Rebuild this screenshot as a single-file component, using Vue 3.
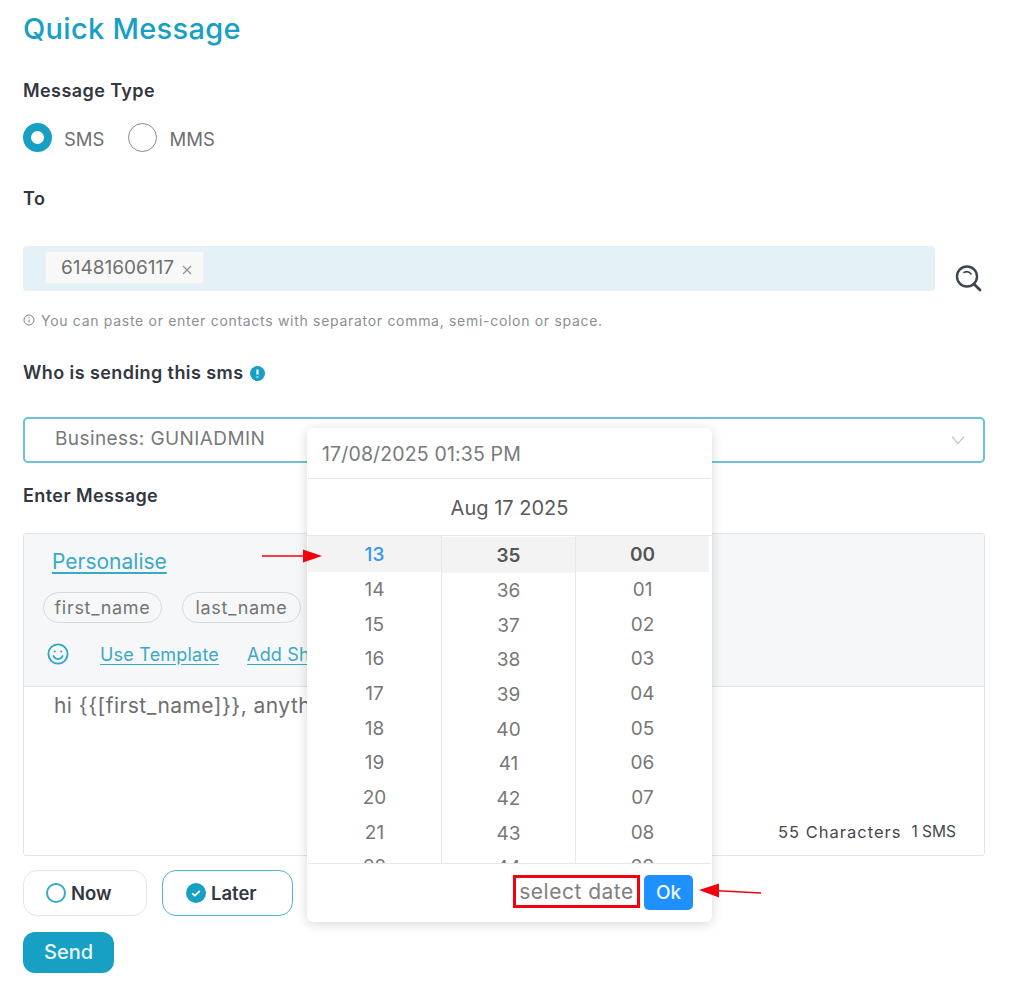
<script setup>
const range = (start, n) => Array.from({ length: n }, (_, i) => String(start + i).padStart(2, '0'))
const columns = [
  { key: 'h', items: range(13, 10) },
  { key: 'm', items: range(35, 10) },
  { key: 's', items: range(0, 10) },
]
const messageText = 'hi {' + '{[first_name]}' + '}, anything new today'
</script>

<template>
  <div class="page">
    <h1 class="title">Quick Message</h1>

    <div class="label type-label">Message Type</div>
    <div class="radios">
      <span class="radio on"></span><span class="radio-text">SMS</span>
      <span class="radio"></span><span class="radio-text">MMS</span>
    </div>

    <div class="label to-label">To</div>
    <div class="to-row">
      <div class="to-input">
        <span class="tag">61481606117
          <svg class="tag-x" width="10" height="10" viewBox="0 0 10 10"><path d="M1 1l8 8M9 1l-8 8" stroke="#8f8f8f" stroke-width="1.1" fill="none" /></svg>
        </span>
      </div>
      <svg class="search" width="28" height="28" viewBox="0 0 28 28" fill="none">
        <circle cx="13" cy="12.5" r="10" stroke="#3c4650" stroke-width="2.4" />
        <path d="M20 20l6 6" stroke="#3c4650" stroke-width="2.8" stroke-linecap="round" />
        <path d="M10 8.5a5.5 5.5 0 0 1 7 1.5" stroke="#3c4650" stroke-width="1.6" stroke-linecap="round" />
      </svg>
    </div>
    <div class="hint">
      <svg width="12" height="12" viewBox="0 0 12 12" fill="none"><circle cx="6" cy="6" r="5" stroke="#7d828a" /><path d="M6 5.4v3M6 3.2v1" stroke="#7d828a" /></svg>
      <span>You can paste or enter contacts with separator comma, semi-colon or space.</span>
    </div>

    <div class="label who-label">Who is sending this sms
      <svg width="15" height="15" viewBox="0 0 15 15"><circle cx="7.5" cy="7.5" r="7.5" fill="#17a0c4" /><path d="M7.5 3.4v5M7.5 10.4v1.2" stroke="#fff" stroke-width="2.2" /></svg>
    </div>
    <div class="select">
      <span class="select-value">Business: GUNIADMIN</span>
      <svg width="14" height="10" viewBox="0 0 14 10" fill="none"><path d="M1 1.5l6 7 6-7" stroke="#c4c7cb" stroke-width="1.2" /></svg>
    </div>

    <div class="label msg-label">Enter Message</div>
    <div class="panel">
      <div class="panel-head">
        <a class="personalise">Personalise</a>
        <div class="chips">
          <span class="chip">first_name</span>
          <span class="chip">last_name</span>
        </div>
        <div class="tools">
          <svg width="22" height="22" viewBox="0 0 22 22" fill="none" stroke="#2fa4c4" stroke-width="1.8">
            <circle cx="11" cy="11" r="9.6" />
            <path d="M6.4 13a5 5 0 0 0 9.2 0" stroke-linecap="round" />
            <circle cx="7.8" cy="8.4" r="1" fill="#2fa4c4" stroke="none" />
            <circle cx="14.2" cy="8.4" r="1" fill="#2fa4c4" stroke="none" />
          </svg>
          <a class="tool-link first">Use Template</a>
          <a class="tool-link">Add Short URL</a>
        </div>
      </div>
      <div class="panel-body">
        <div class="msg-text" v-text="messageText"></div>
        <div class="counter"><span class="count-chars">55 Characters</span><span class="count-sms">1 SMS</span></div>
      </div>
    </div>

    <div class="when">
      <button class="when-btn now"><span class="ring"></span>Now</button>
      <button class="when-btn later">
        <svg width="20" height="20" viewBox="0 0 20 20"><circle cx="10" cy="10" r="10" fill="#17a0c4" /><path d="M6.2 10.3l2.6 2.3 5-4.6" stroke="#fff" stroke-width="1.8" fill="none" /></svg>
        Later
      </button>
    </div>
    <button class="send">Send</button>

    <div class="picker">
      <div class="picker-input">17/08/2025 01:35 PM</div>
      <div class="picker-date">Aug 17 2025</div>
      <div class="picker-cols">
        <ul v-for="col in columns" :key="col.key" class="col" :class="'col-' + col.key">
          <li v-for="(item, i) in col.items" :key="item" class="cell" :class="{ active: i === 0 }">{{ item }}</li>
        </ul>
      </div>
      <div class="picker-foot">
        <span class="select-date">select date</span>
        <button class="ok">Ok</button>
      </div>
    </div>

    <svg class="annot annot-left" width="60" height="14" viewBox="0 0 60 14">
      <path d="M0 7h44" stroke="#f20010" stroke-width="1.6" />
      <path d="M41 0.5L60 7 41 13.5z" fill="#f20010" />
    </svg>
    <svg class="annot annot-right" width="62" height="16" viewBox="0 0 62 16">
      <path d="M62 10L14 7.5" stroke="#f20010" stroke-width="1.6" />
      <path d="M0 7L20 0.5V14.5z" fill="#f20010" />
    </svg>
  </div>
</template>

<style>
html, body { margin: 0; background: #fff; }
</style>

<style scoped>
* { box-sizing: border-box; }
.page {
  position: relative;
  width: 1024px;
  height: 999px;
  overflow: hidden;
  padding: 0 39px 0 23px;
  font-family: Inter, "Noto Sans", sans-serif;
  color: #6b6b6b;
  background: #fff;
}
.title {
  margin: 0;
  padding-top: 11px;
  height: 73px;
  font-size: 29px;
  line-height: 36px;
  font-weight: 500;
  letter-spacing: 0.3px;
  color: #17a0c4;
}
.label {
  font-size: 18px;
  line-height: 24px;
  font-weight: 600;
  letter-spacing: 0.42px;
  color: #333740;
}
.type-label { margin-top: 6px; }
.radios {
  display: flex;
  align-items: center;
  margin-top: 20px;
  height: 28px;
}
.radio {
  width: 29px;
  height: 29px;
  border-radius: 50%;
  border: 1.5px solid #8a8a8a;
}
.radio.on { border: 8px solid #17a0c4; }
.radio-text {
  margin: 0 24px 0 12px;
  padding-top: 3px;
  font-size: 18.5px;
  color: #6e6e6e;
}
.to-label { margin-top: 36px; }
.to-row {
  display: flex;
  align-items: flex-start;
  margin-top: 35px;
}
.to-input {
  display: flex;
  align-items: flex-start;
  width: 912px;
  height: 45px;
  padding: 5px 22px;
  background: #e4f2f7;
  border-radius: 4px;
}
.tag {
  display: flex;
  align-items: center;
  height: 33px;
  width: 159px;
  padding-left: 15px;
  font-size: 19px;
  background: #f8f8f8;
  border: 1px solid #eef0f1;
  color: #707070;
  white-space: nowrap;
}
.tag-x { margin-left: 8px; margin-top: 4px; }
.search { margin: 18px 0 0 19px; }
.hint {
  display: flex;
  align-items: center;
  gap: 6px;
  margin-top: 19px;
  height: 18px;
  font-size: 14px;
  letter-spacing: 0.7px;
  white-space: nowrap;
  color: #8b8f96;
}
.who-label {
  display: flex;
  align-items: center;
  gap: 6px;
  margin-top: 32px;
}
.select {
  display: flex;
  align-items: center;
  justify-content: space-between;
  height: 46px;
  margin-top: 32px;
  padding: 0 18px 0 30px;
  border: 2px solid #6cc3d9;
  border-radius: 5px;
  font-size: 19px;
  letter-spacing: 0.4px;
  color: #77797c;
}
.select-value { padding-bottom: 3px; }
.msg-label { margin-top: 21px; }
.panel {
  margin-top: 25px;
  height: 323px;
  border: 1px solid #e2e5e8;
  border-radius: 3px;
}
.panel-head {
  height: 153px;
  padding: 16px 19px;
  background: #f6f7f9;
  border-bottom: 1px solid #dfe2e5;
}
.personalise, .tool-link {
  color: #3ba9c6;
  text-decoration: underline;
  text-underline-offset: 3px;
}
.personalise {
  display: block;
  margin-left: 9px;
  font-size: 21px;
  line-height: 24px;
}
.chips {
  display: flex;
  gap: 20px;
  margin-top: 18px;
}
.chip {
  display: flex;
  align-items: center;
  justify-content: center;
  width: 119px;
  height: 31px;
  border: 1px solid #d8dadc;
  border-radius: 16px;
  font-size: 18px;
  letter-spacing: 0.7px;
  color: #747474;
}
.tools {
  display: flex;
  align-items: center;
  gap: 28px;
  margin: 20px 0 0 4px;
}
.tools svg { margin-right: 3px; }
.tool-link { font-size: 18px; letter-spacing: 0.2px; white-space: nowrap; }
.panel-body {
  position: relative;
  height: 168px;
  padding: 6px 30px;
}
.msg-text {
  font-size: 21px;
  line-height: 26px;
  letter-spacing: 0.45px;
  color: #6e6e6e;
}
.counter {
  position: absolute;
  right: 28px;
  bottom: 13px;
  display: flex;
  gap: 10px;
  color: #45484d;
}
.count-chars { font-size: 16.5px; letter-spacing: 1px; }
.count-sms { font-size: 15.5px; }
.when {
  display: flex;
  gap: 15px;
  margin-top: 14px;
}
.when-btn {
  display: flex;
  align-items: center;
  gap: 5px;
  height: 46px;
  background: #fff;
  font-family: inherit;
  font-size: 18.5px;
  font-weight: 600;
  color: #333740;
  border-radius: 14px;
}
.now { width: 124px; padding: 0 0 0 22px; border: 1px solid #e2e6ea; }
.later { width: 131px; padding: 0 0 0 23px; border: 1.5px solid #4fb6d0; }
.ring {
  width: 20px;
  height: 20px;
  border: 2px solid #3ba9c6;
  border-radius: 50%;
}
.send {
  display: block;
  width: 91px;
  height: 41px;
  margin-top: 16px;
  padding: 0 0 2px;
  border: 0;
  border-radius: 12px;
  background: #17a0c4;
  color: #eaf7fb;
  font-family: inherit;
  font-size: 20px;
  font-weight: 500;
}
.picker {
  position: absolute;
  left: 307px;
  top: 428px;
  width: 405px;
  height: 494px;
  display: flex;
  flex-direction: column;
  background: #fff;
  border-radius: 6px;
  box-shadow: 0 2px 12px rgba(0, 0, 0, 0.16);
}
.picker-input {
  height: 51px;
  margin: 0 1px;
  padding: 2px 14px 0;
  display: flex;
  align-items: center;
  border-bottom: 1px solid #e8e8e8;
  font-size: 19.5px;
  letter-spacing: 0.15px;
  color: #77797c;
}
.picker-date {
  height: 57px;
  padding-top: 2px;
  display: flex;
  align-items: center;
  justify-content: center;
  border-bottom: 1px solid #e8e8e8;
  font-size: 20px;
  color: #5a5a5a;
}
.picker-cols {
  display: flex;
  height: 328px;
  margin: 0 1px;
  overflow: hidden;
  border-bottom: 1px solid #e8e8e8;
}
.col {
  flex: 1;
  margin: 0;
  padding: 0;
  list-style: none;
  border-left: 1px solid #e8e8e8;
}
.col-h { border-left: 0; }
.col-m .cell { transform: translateY(1px); }
.col-s { margin-right: 2px; }
.cell {
  height: 34.7px;
  display: flex;
  align-items: center;
  justify-content: center;
  font-size: 19px;
  color: #777;
}
.cell.active {
  height: 36px;
  background: #f3f3f3;
  font-weight: 600;
  color: #555;
}
.col-h .cell.active { color: #2f97f5; font-weight: 500; }
.picker-foot {
  display: flex;
  align-items: flex-start;
  justify-content: flex-end;
  flex: 1;
  gap: 4px;
  padding: 11px 19px 0 0;
}
.select-date {
  display: flex;
  align-items: center;
  justify-content: center;
  width: 127px;
  height: 33px;
  border: 3px solid #f20010;
  font-size: 21px;
  letter-spacing: 0.5px;
  color: #808080;
  white-space: nowrap;
}
.ok {
  width: 49px;
  height: 35px;
  border: 0;
  border-radius: 5px;
  background: #1e90ff;
  color: #eef7ff;
  font-family: inherit;
  font-size: 19px;
  font-weight: 500;
}
.annot { position: absolute; }
.annot-left { left: 262px; top: 549px; }
.annot-right { left: 699px; top: 883px; }
</style>
